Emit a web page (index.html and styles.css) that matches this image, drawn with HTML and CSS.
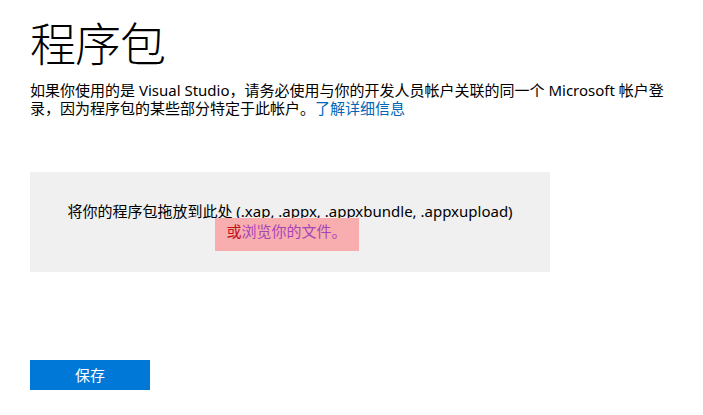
FILE: index.html
```html
<!DOCTYPE html>
<html lang="zh-CN">
<head>
<meta charset="utf-8">
<title>程序包</title>
<link rel="stylesheet" href="styles.css">
</head>
<body>
<main class="page">
  <h1 class="title">程序包</h1>
  <p class="intro">如果你使用的是 Visual Studio<span class="punct">，</span>请务必使用与你的开发人员帐户关联的同一个 Microsoft 帐户登录<span class="punct">，</span>因为程序包的某些部分特定于此帐户。<a class="link" href="#">了解详细信息</a></p>
  <div class="dropzone">
    <div class="drop-text">将你的程序包拖放到此处 (.xap, .appx, .appxbundle, .appxupload)</div>
    <div class="browse-row"><span class="browse"><span class="or">或</span><a class="browse-link" href="#">浏览你的文件。</a></span></div>
  </div>
  <button class="save" type="button">保存</button>
</main>
</body>
</html>
```
FILE: styles.css
```css
html, body {
  margin: 0;
  padding: 0;
  background: #ffffff;
}
body {
  font-family: "Noto Sans", "Noto Sans CJK SC", sans-serif;
  color: #000000;
  font-size: 15px;
}
.page {
  padding: 0 30px;
  display: flex;
  flex-direction: column;
  align-items: flex-start;
}
.title {
  margin: 13px 0 0;
  font-family: "Noto Sans CJK SC", sans-serif;
  font-size: 46px;
  font-weight: 300;
  line-height: 56px;
  letter-spacing: -1px;
}
.intro {
  margin: 12px 0 0;
  width: 645px;
  line-height: 18.25px;
}
.punct {
  font-family: "Noto Sans CJK TC", sans-serif;
}
.link {
  color: #0067b8;
  text-decoration: none;
}
.dropzone {
  margin-top: 54px;
  width: 520px;
  height: 100px;
  box-sizing: border-box;
  padding-top: 29px;
  background: #f0f0f0;
  display: flex;
  flex-direction: column;
  align-items: center;
  text-align: center;
  line-height: 20px;
}
.browse-row {
  margin-top: -3px;
}
.browse {
  display: inline-block;
  margin-right: 6px;
  padding: 3px 12px 10px 11px;
  background: #f8aeae;
}
.or {
  color: #c0101c;
}
.browse-link {
  color: #a545b8;
  text-decoration: none;
}
.save {
  margin-top: 88px;
  width: 120px;
  height: 30px;
  border: none;
  padding: 0;
  background: #0078d7;
  color: #ffffff;
  font-family: "Noto Sans CJK SC", sans-serif;
  font-size: 15px;
}
```
